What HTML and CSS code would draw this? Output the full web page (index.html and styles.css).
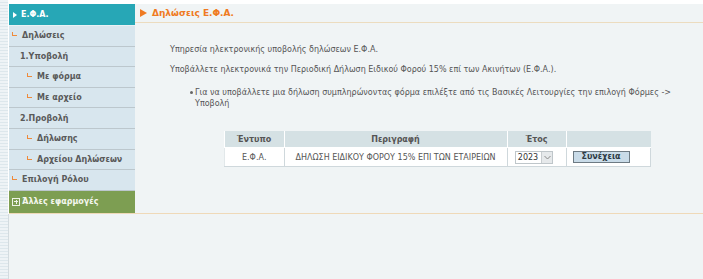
FILE: index.html
```html
<!DOCTYPE html>
<html lang="el">
<head>
<meta charset="utf-8">
<link rel="stylesheet" href="styles.css">
</head>
<body>
<div class="page">
  <div class="top">
    <aside class="side">
      <div class="side-head"><span class="wtri"></span>Ε.Φ.Α.</div>
      <div class="item lvl0"><span class="corner"></span>Δηλώσεις</div>
      <div class="item grp">1.Υποβολή</div>
      <div class="item lvl1"><span class="corner"></span>Με φόρμα</div>
      <div class="item lvl1"><span class="corner"></span>Με αρχείο</div>
      <div class="item grp">2.Προβολή</div>
      <div class="item lvl1"><span class="corner"></span>Δήλωσης</div>
      <div class="item lvl1"><span class="corner"></span>Αρχείου Δηλώσεων</div>
      <div class="item lvl0"><span class="corner"></span>Επιλογή Ρόλου</div>
      <div class="other"><span class="plus"></span>Άλλες εφαρμογές</div>
    </aside>
    <main class="main">
      <div class="mhead"><span class="otri"></span>Δηλώσεις Ε.Φ.Α.</div>
      <div class="content">
        <p class="para">Υπηρεσία ηλεκτρονικής υποβολής δηλώσεων Ε.Φ.Α.</p>
        <p class="para">Υποβάλλετε ηλεκτρονικά την Περιοδική Δήλωση Ειδικού Φορού 15% επί των Ακινήτων (Ε.Φ.Α.).</p>
        <ul class="list">
          <li>Για να υποβάλλετε μια δήλωση συμπληρώνοντας φόρμα επιλέξτε από τις Βασικές Λειτουργίες την επιλογή Φόρμες -&gt; Υποβολή</li>
        </ul>
        <table class="grid">
          <thead>
            <tr><th class="c1">Έντυπο</th><th class="c2">Περιγραφή</th><th class="c3">Έτος</th><th class="c4"></th></tr>
          </thead>
          <tbody>
            <tr>
              <td>Ε.Φ.Α.</td>
              <td>ΔΗΛΩΣΗ ΕΙΔΙΚΟΥ ΦΟΡΟΥ 15% ΕΠΙ ΤΩΝ ΕΤΑΙΡΕΙΩΝ</td>
              <td><span class="select"><span class="val">2023</span><span class="arrow"><svg width="7" height="5" viewBox="0 0 7 5"><path d="M0.5 1 L3.5 4 L6.5 1" fill="none" stroke="#8a8a8a" stroke-width="1"/></svg></span></span></td>
              <td class="btn-cell"><span class="btn">Συνέχεια</span></td>
            </tr>
          </tbody>
        </table>
      </div>
    </main>
  </div>
  <div class="bottom"></div>
</div>
</body>
</html>
```

FILE: styles.css
```css
html, body {
  margin: 0;
  padding: 0;
}
body {
  width: 703px;
  height: 279px;
  overflow: hidden;
  font-family: "DejaVu Sans", Verdana, sans-serif;
  background: repeating-linear-gradient(to bottom, #eef3f6 0px, #eef3f6 2px, #dde7ec 2px, #dde7ec 3px);
}
.page {
  margin-left: 8px;
  padding-top: 4px;
  background: #fff;
  height: 275px;
  display: flex;
  flex-direction: column;
}
.top {
  display: flex;
  border-bottom: 1px solid #efd9b8;
  margin-left: 1px;
}
.side {
  width: 126px;
  flex: none;
  background: #d8e6ee;
  display: flex;
  flex-direction: column;
}
.side-head {
  height: 21px;
  background: #27a7b6;
  color: #fff;
  font-weight: bold;
  font-size: 8px;
  display: flex;
  align-items: center;
  padding-left: 4px;
  border-bottom: 1px solid #e9f1f4;
}
.wtri {
  width: 0;
  height: 0;
  border-left: 4px solid #fff;
  border-top: 3.5px solid transparent;
  border-bottom: 3.5px solid transparent;
  margin-right: 4px;
}
.item {
  height: 19.6px;
  border-bottom: 1px solid #bcc7cd;
  display: flex;
  align-items: center;
  font-size: 8px;
  font-weight: bold;
  color: #5a5a5a;
}
.item.lvl0 { padding-left: 3px; }
.item.grp { padding-left: 11px; }
.item.lvl1 { padding-left: 18px; }
.corner {
  width: 4px;
  height: 3px;
  border-left: 1px solid #ef8a3a;
  border-bottom: 1px solid #ef8a3a;
  margin-right: 5px;
  margin-top: -3px;
}
.other {
  height: 22px;
  background: #7d9e52;
  color: #f4f7ee;
  font-size: 8px;
  font-weight: bold;
  display: flex;
  align-items: center;
  padding-left: 3px;
}
.plus {
  width: 6px;
  height: 6px;
  border: 1px solid #eef3e6;
  margin-right: 2px;
  position: relative;
}
.plus::before {
  content: "";
  position: absolute;
  left: 1px;
  top: 2.5px;
  width: 4px;
  height: 1px;
  background: #eef3e6;
}
.plus::after {
  content: "";
  position: absolute;
  left: 2.5px;
  top: 1px;
  width: 1px;
  height: 4px;
  background: #eef3e6;
}
.main {
  flex: 1;
  background: #f0f4f5;
  display: flex;
  flex-direction: column;
}
.mhead {
  height: 18px;
  border-bottom: 1px solid #ecdcbf;
  display: flex;
  align-items: center;
  padding-left: 5px;
  color: #ef7a22;
  font-weight: bold;
  font-size: 9px;
}
.otri {
  width: 0;
  height: 0;
  border-left: 7px solid #ef7a22;
  border-top: 4.5px solid transparent;
  border-bottom: 4.5px solid transparent;
  margin-right: 5px;
}
.content {
  padding: 21px 0 0 35px;
  color: #555;
  font-size: 8px;
}
.para {
  margin: 0 0 8px 0;
  line-height: 12px;
}
.list {
  margin: 11px 0 0 0;
  padding: 0 8px 0 25px;
  line-height: 11px;
  list-style: none;
}
.list li {
  position: relative;
}
.list li::before {
  content: "";
  position: absolute;
  left: -5px;
  top: 4px;
  width: 3px;
  height: 3px;
  border-radius: 50%;
  background: #666;
}
.grid {
  margin: 22px 0 0 54px;
  border-collapse: collapse;
  background: #fff;
  font-size: 8px;
  color: #555;
}
.grid th {
  background: #d5e1e4;
  height: 16px;
  padding: 0;
  font-weight: bold;
  border-left: 1px solid #fff;
  border-bottom: 1px solid #fff;
}
.grid th:first-child { border-left: none; }
.grid td {
  height: 18px;
  padding: 0;
  text-align: center;
  border-left: 1px solid #cfd8dc;
  border-bottom: 1px solid #cfd8dc;
}
.grid td:first-child { border-left: 1px solid #e2e8ea; }
.grid td:last-child { border-right: 1px solid #cfd8dc; }
.grid td.btn-cell {
  text-align: left;
  padding-left: 6px;
}
.c1 { width: 59px; }
.c2 { width: 222px; }
.c3 { width: 58px; }
.c4 { width: 84px; }
.select {
  display: inline-flex;
  align-items: center;
  border: 1px solid #bfc6ca;
  height: 11px;
  background: #fff;
  vertical-align: middle;
  margin-left: -5px;
}
.select .val {
  padding: 0 3px 0 2px;
  font-size: 8px;
  color: #333;
}
.select .arrow {
  width: 10px;
  height: 11px;
  background: #e6e9eb;
  border-left: 1px solid #c8cdd0;
  display: flex;
  align-items: center;
  justify-content: center;
}
.btn {
  display: inline-block;
  width: 55px;
  height: 10px;
  line-height: 10px;
  text-align: center;
  border: 1px solid #6d7a83;
  background: #c9dbe8;
  color: #2f3b45;
  font-weight: bold;
  font-size: 8px;
  vertical-align: middle;
}
.bottom {
  flex: 1;
  background: #f0f4f5;
  border-left: 1px solid #d3dbdf;
}
```
